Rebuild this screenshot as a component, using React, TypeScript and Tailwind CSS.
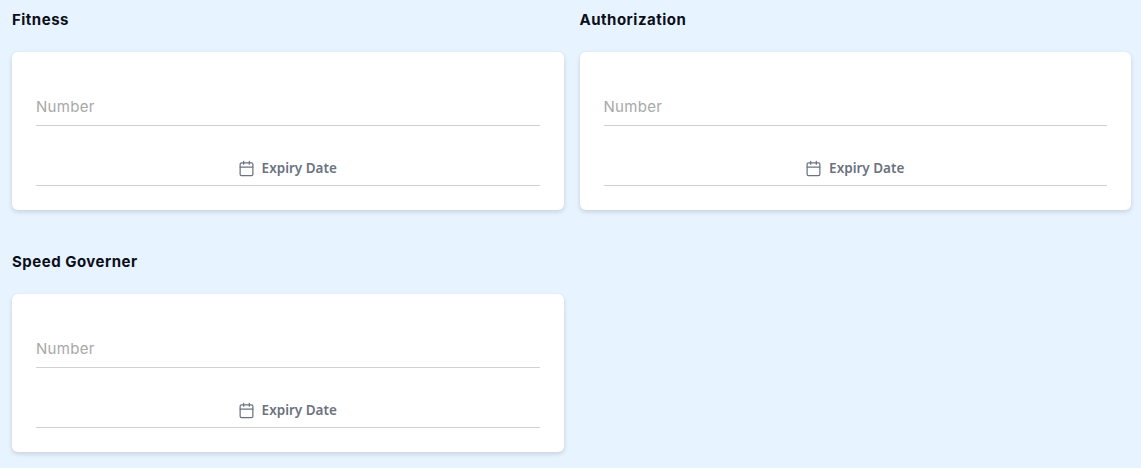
import React from 'react';
import { Calendar } from 'lucide-react';

const sections = ['Fitness', 'Authorization', 'Speed Governer'];

const DocumentCard = ({ title }: { title: string }) => (
  <div>
    <h3 className="h-[52px] pt-[11px] text-[15px] leading-[18px] font-bold tracking-[0.5px] text-[#0b0f19] font-['Inter',sans-serif]">
      {title}
    </h3>
    <div className="h-[158px] px-6 pt-[40px] bg-white rounded-md shadow-[0_2px_5px_rgba(0,0,0,0.14)]">
      {/* Number */}
      <div className="h-[34px] border-b border-[#d1d1d1]">
        <input
          placeholder="Number"
          className="w-full h-[28px] text-[15px] tracking-[0.3px] outline-none placeholder:text-[#a8a8a8] font-['Inter',sans-serif]"
        />
      </div>

      {/* Expiry Date */}
      <div className="h-[60px] flex items-end justify-center border-b border-[#d1d1d1]">
        <button className="h-[34px] pr-[1px] flex items-center gap-[7px] text-[13.5px] font-semibold text-[#6b7280] font-['Noto_Sans',sans-serif]">
          <Calendar className="w-[17px] h-[17px]" strokeWidth={1.75} />
          Expiry Date
        </button>
      </div>
    </div>
  </div>
);

const App: React.FC = () => {
  return (
    <div className="min-h-[468px] pl-3 pr-[10px] bg-[#e7f3ff]">
      <div className="grid grid-cols-2 gap-x-4 gap-y-8">
        {sections.map((title) => (
          <DocumentCard key={title} title={title} />
        ))}
      </div>
    </div>
  );
};

export default App;
